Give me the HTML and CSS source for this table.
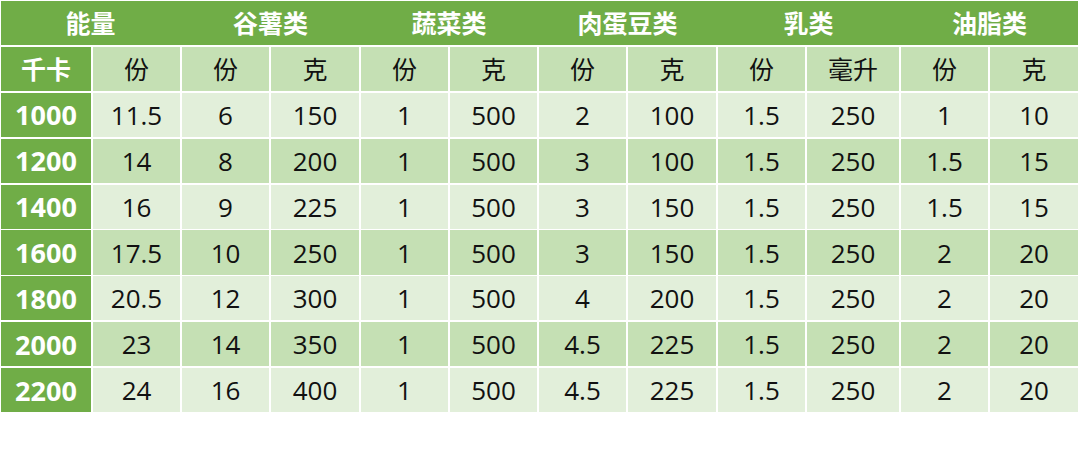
FILE: index.html
```html
<!DOCTYPE html>
<html lang="zh">
<head>
<meta charset="utf-8">
<link rel="stylesheet" href="styles.css">
</head>
<body>
<div class="grid">
  <div class="headrow">
    <div class="h1">能量</div>
    <div class="h1">谷薯类</div>
    <div class="h1">蔬菜类</div>
    <div class="h1">肉蛋豆类</div>
    <div class="h1">乳类</div>
    <div class="h1">油脂类</div>
  </div>

  <div class="key zh">千卡</div>
  <div class="c dark zh">份</div><div class="c dark zh">份</div><div class="c dark zh">克</div>
  <div class="c dark zh">份</div><div class="c dark zh">克</div>
  <div class="c dark zh">份</div><div class="c dark zh">克</div>
  <div class="c dark zh">份</div><div class="c dark zh">毫升</div>
  <div class="c dark zh">份</div><div class="c dark zh">克</div>

  <div class="key">1000</div>
  <div class="c light">11.5</div><div class="c light">6</div><div class="c light">150</div><div class="c light">1</div><div class="c light">500</div><div class="c light">2</div><div class="c light">100</div><div class="c light">1.5</div><div class="c light">250</div><div class="c light">1</div><div class="c light">10</div>

  <div class="key">1200</div>
  <div class="c dark">14</div><div class="c dark">8</div><div class="c dark">200</div><div class="c dark">1</div><div class="c dark">500</div><div class="c dark">3</div><div class="c dark">100</div><div class="c dark">1.5</div><div class="c dark">250</div><div class="c dark">1.5</div><div class="c dark">15</div>

  <div class="key">1400</div>
  <div class="c light">16</div><div class="c light">9</div><div class="c light">225</div><div class="c light">1</div><div class="c light">500</div><div class="c light">3</div><div class="c light">150</div><div class="c light">1.5</div><div class="c light">250</div><div class="c light">1.5</div><div class="c light">15</div>

  <div class="key">1600</div>
  <div class="c dark">17.5</div><div class="c dark">10</div><div class="c dark">250</div><div class="c dark">1</div><div class="c dark">500</div><div class="c dark">3</div><div class="c dark">150</div><div class="c dark">1.5</div><div class="c dark">250</div><div class="c dark">2</div><div class="c dark">20</div>

  <div class="key">1800</div>
  <div class="c light">20.5</div><div class="c light">12</div><div class="c light">300</div><div class="c light">1</div><div class="c light">500</div><div class="c light">4</div><div class="c light">200</div><div class="c light">1.5</div><div class="c light">250</div><div class="c light">2</div><div class="c light">20</div>

  <div class="key">2000</div>
  <div class="c dark">23</div><div class="c dark">14</div><div class="c dark">350</div><div class="c dark">1</div><div class="c dark">500</div><div class="c dark">4.5</div><div class="c dark">225</div><div class="c dark">1.5</div><div class="c dark">250</div><div class="c dark">2</div><div class="c dark">20</div>

  <div class="key">2200</div>
  <div class="c light">24</div><div class="c light">16</div><div class="c light">400</div><div class="c light">1</div><div class="c light">500</div><div class="c light">4.5</div><div class="c light">225</div><div class="c light">1.5</div><div class="c light">250</div><div class="c light">2</div><div class="c light">20</div>
</div>
</body>
</html>
```
FILE: styles.css
```css
html, body {
  margin: 0;
  padding: 0;
  background: #ffffff;
}
body {
  padding: 1px 0 0 1px;
  font-family: "Open Sans", "Noto Sans CJK SC", sans-serif;
}
.grid {
  display: grid;
  grid-template-columns: 90px 87px 87px 88px 87px 87px 87px 88px 87px 92px 87px 88px;
  grid-auto-rows: 44.1px;
  column-gap: 2px;
  row-gap: 1.8px;
  width: 1077px;
}
.grid > div {
  display: flex;
  align-items: center;
  justify-content: center;
  line-height: 1;
}
.grid > .headrow {
  grid-column: 1 / -1;
  display: grid;
  grid-template-columns: 179px 177px 176px 177px 181px 177px;
  column-gap: 2px;
  background: #70ad47;
}
.h1 {
  display: flex;
  align-items: center;
  justify-content: center;
  color: #ffffff;
  font-family: "Noto Sans CJK SC", sans-serif;
  font-weight: 700;
  font-size: 25px;
  line-height: 1;
  padding-bottom: 2px;
}
.key {
  background: #70ad47;
  color: #ffffff;
  font-weight: 700;
  font-size: 27px;
}
.c {
  color: #111111;
  font-size: 26px;
}
.zh {
  font-family: "Noto Sans CJK SC", sans-serif;
  font-size: 25px;
}
.key.zh {
  font-weight: 700;
}
.c.zh {
  font-weight: 400;
}
.dark {
  background: #c5e0b4;
}
.light {
  background: #e2efda;
}
```
